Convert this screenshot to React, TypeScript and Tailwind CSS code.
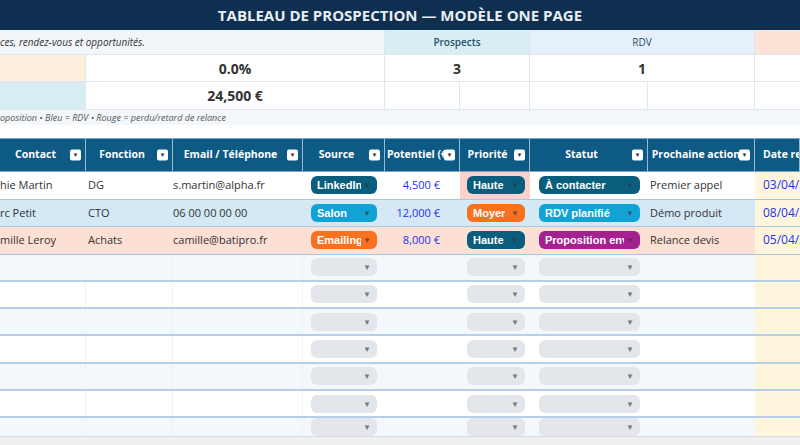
import React from 'react';

const cols = 'grid grid-cols-[86px_87px_130px_82px_75px_70px_118px_107px_1fr]';

const Caret = () => (
  <span className="ml-auto pl-[2px] text-[8px] leading-none opacity-60 text-[#333]">▼</span>
);

const Pill = ({ label, cls, w }: { label?: string; cls: string; w: string }) => (
  <div className={`flex items-center h-[18px] rounded-[6px] px-[6px] text-[11px] font-bold ${cls} ${w}`}>
    <span className="whitespace-nowrap overflow-hidden" style={{ fontFamily: '"Liberation Sans", Arial, sans-serif' }}>{label}</span>
    <Caret />
  </div>
);

const headers = ['Contact', 'Fonction', 'Email / Téléphone', 'Source', 'Potentiel (€', 'Priorité', 'Statut', 'Prochaine action', 'Date rel'];

const rows = [
  { bg: 'bg-white', c: 'hie Martin', f: 'DG', e: 's.martin@alpha.fr', s: ['LinkedIn', 'bg-[#0b5d7e] text-white'], p: '4,500 €', pr: ['Haute', 'bg-[#0b5d7e] text-white'], prBg: 'bg-[#fbd0cd]', st: ['À contacter', 'bg-[#0b5d7e] text-white'], a: 'Premier appel', d: '03/04/2' },
  { bg: 'bg-[#d4e8f5]', c: 'rc Petit', f: 'CTO', e: '06 00 00 00 00', s: ['Salon', 'bg-[#12a3d6] text-white'], p: '12,000 €', pr: ['Moyer', 'bg-[#f9711f] text-white'], prBg: '', st: ['RDV planifié', 'bg-[#12a3d6] text-white'], a: 'Démo produit', d: '08/04/2' },
  { bg: 'bg-[#fde0d4]', c: 'mille Leroy', f: 'Achats', e: 'camille@batipro.fr', s: ['Emailing', 'bg-[#f9711f] text-white'], p: '8,000 €', pr: ['Haute', 'bg-[#0b5d7e] text-white'], prBg: '', st: ['Proposition envo', 'bg-[#a4218f] text-white'], a: 'Relance devis', d: '05/04/2' },
];

export default function App() {
  return (
    <div className="w-[800px] h-[445px] overflow-hidden bg-white text-[#333] text-[12px]" style={{ fontFamily: '"Open Sans", "Noto Sans", sans-serif' }}>
      <div className="h-[30px] bg-[#0e2f50] flex items-center justify-center">
        <span className="text-[#e8edf2] font-bold text-[15px]">TABLEAU DE PROSPECTION — MODÈLE ONE PAGE</span>
      </div>
      <div className={`${cols} h-[25px] border-b border-[#dfe6ee]`}>
        <div className="col-span-4 bg-[#f1f6fa] italic text-[10px] flex items-center whitespace-nowrap overflow-hidden border-r border-[#dfe6ee]">ces, rendez-vous et opportunités.</div>
        <div className="col-span-2 bg-[#d8eef2] text-[#25506f] font-semibold text-[10px] flex items-center justify-center border-r border-[#dfe6ee]">Prospects</div>
        <div className="col-span-2 bg-[#e5f0fa] text-[#25506f] text-[10px] flex items-center justify-center border-r border-[#dfe6ee]">RDV</div>
        <div className="bg-[#fde2d6]"></div>
      </div>
      <div className={`${cols} h-[27px] border-b border-[#dfe6ee] font-bold text-[14px] text-[#333]`}>
        <div className="bg-[#fcf0dc] border-r border-[#dfe6ee]"></div>
        <div className="col-span-3 flex items-center justify-center border-r border-[#dfe6ee]">0.0%</div>
        <div className="col-span-2 flex items-center justify-center border-r border-[#dfe6ee]">3</div>
        <div className="col-span-2 flex items-center justify-center border-r border-[#dfe6ee]">1</div>
        <div></div>
      </div>
      <div className={`${cols} h-[28px] border-b border-[#dfe6ee] font-bold text-[14px]`}>
        <div className="bg-[#d8eef2] border-r border-[#dfe6ee]"></div>
        <div className="col-span-3 flex items-center justify-center border-r border-[#dfe6ee]">24,500 €</div>
        <div className="border-r border-[#dfe6ee]"></div>
        <div className="border-r border-[#dfe6ee]"></div>
        <div className="border-r border-[#dfe6ee]"></div>
        <div className="border-r border-[#dfe6ee]"></div>
        <div></div>
      </div>
      <div className="h-[15px] bg-[#f3f7fa] italic text-[9px] text-[#555] flex items-center whitespace-nowrap">oposition • Bleu = RDV • Rouge = perdu/retard de relance</div>
      <div className="h-[13px]"></div>
      <div className={`${cols} h-[34px] bg-[#0d5a85] border-y border-[#7aa3c2] text-white font-bold text-[10.5px]`}>
        {headers.map((h, i) => (
          <div key={i} className={`flex items-center ${i === 8 ? 'justify-start pl-2' : 'justify-center pr-[14px]'} ${i === 4 || i === 7 ? 'pl-[4px]' : ''} relative border-r border-[#9db8cf] whitespace-nowrap overflow-hidden`}>
            <span>{h}</span>
            {i < 8 && (
              <span className="absolute right-[4px] top-1/2 -translate-y-1/2 w-[11px] h-[11px] bg-white rounded-[2px] flex items-center justify-center text-[#333] text-[6px]">▼</span>
            )}
          </div>
        ))}
      </div>
      {rows.map((r, i) => (
        <div key={i} className={`${cols} h-[27.5px] ${r.bg} border-b border-[#a9c6e4] text-[11px] text-[#333]`}>
          <div className="flex items-center whitespace-nowrap overflow-hidden">{r.c}</div>
          <div className="flex items-center px-[2px]">{r.f}</div>
          <div className="flex items-center">{r.e}</div>
          <div className="flex items-center pl-[8px]"><Pill label={r.s[0]} cls={r.s[1]} w="w-[66px]" /></div>
          <div className="flex items-center justify-end pr-[20px] text-[#2233ee]">{r.p}</div>
          <div className={`flex items-center pl-[7px] ${r.prBg}`}><Pill label={r.pr[0]} cls={r.pr[1]} w="w-[58px]" /></div>
          <div className="flex items-center pl-[9px]"><Pill label={r.st[0]} cls={r.st[1]} w="w-[101px]" /></div>
          <div className="flex items-center pl-[2px]">{r.a}</div>
          <div className="flex items-center pl-[8px] bg-[#fdf5dc] text-[#2233ee] text-[12px] whitespace-nowrap overflow-hidden">{r.d}</div>
        </div>
      ))}
      {Array.from({ length: 7 }).map((_, i) => (
        <div key={i} className={`${cols} ${i === 6 ? 'h-[18px]' : 'h-[27.3px]'} ${i % 2 === 0 ? 'bg-[#f3f8fd]' : 'bg-white'} ${i === 6 ? '' : 'border-b-2 border-[#b7cfe6]'} overflow-hidden`}>
          <div className="border-r border-[#edf2f7]"></div>
          <div className="border-r border-[#edf2f7]"></div>
          <div className="border-r border-[#edf2f7]"></div>
          <div className="flex items-center pl-[8px]"><Pill cls="bg-[#e3e6ea] text-[#999]" w="w-[66px]" /></div>
          <div></div>
          <div className="flex items-center pl-[7px]"><Pill cls="bg-[#e3e6ea] text-[#999]" w="w-[58px]" /></div>
          <div className="flex items-center pl-[9px]"><Pill cls="bg-[#e3e6ea] text-[#999]" w="w-[101px]" /></div>
          <div></div>
          <div className="bg-[#fdf5dc]"></div>
        </div>
      ))}
      <div className="h-[10px] bg-[#efefef] border-t border-[#dcdcdc]"></div>
    </div>
  );
}
